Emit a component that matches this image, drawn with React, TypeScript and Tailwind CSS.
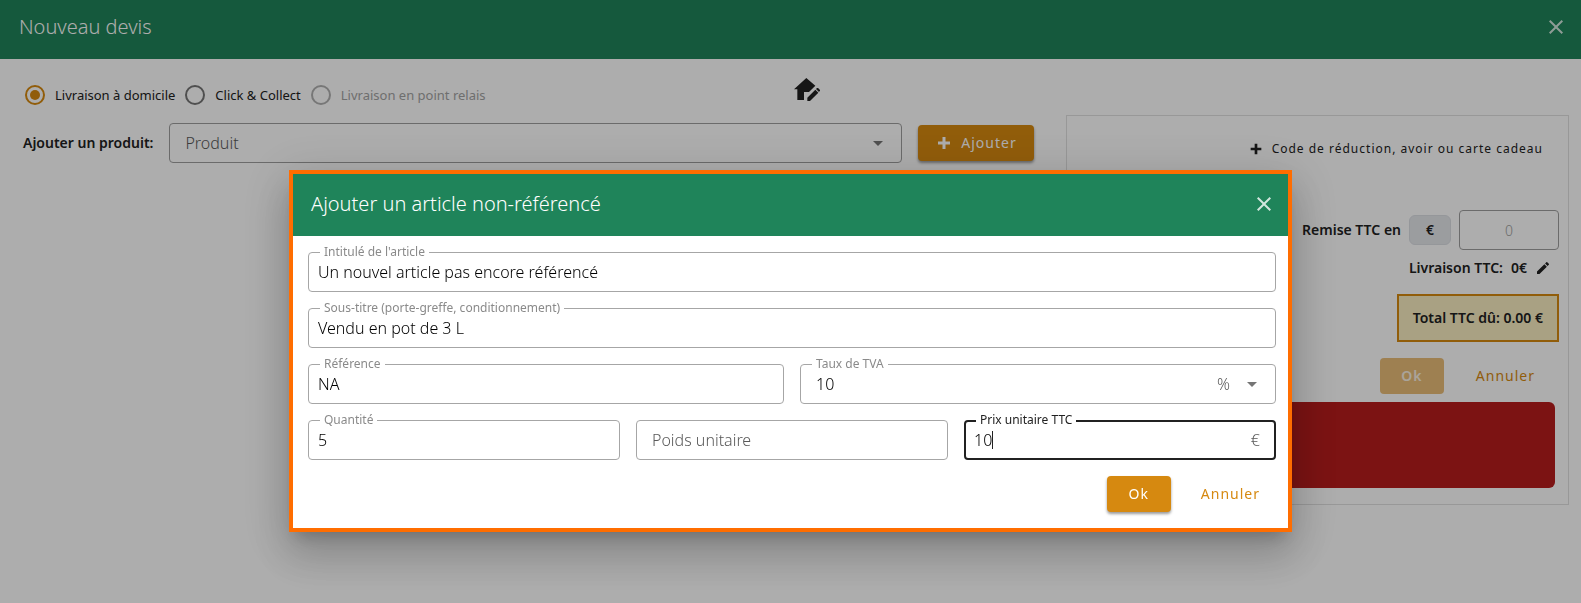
import React from 'react';
import { MdArrowDropDown, MdClose, MdEdit } from 'react-icons/md';

import cx from 'clsx';

type FieldProps = {
    id: string;
    label: string;
    value: string;
    suffix?: string;
    focused?: boolean;
}

const Field = ({ id, label, value, suffix, focused }: FieldProps) => (
    <div className="relative">
        <label
            htmlFor={id}
            className={cx(
                'absolute -top-2 left-3 px-1 bg-white text-xs leading-4 whitespace-nowrap',
                focused ? 'text-[#212121]' : 'text-[#8a8a8a]'
            )}
        >
            {label}
        </label>
        <input
            id={id}
            type="text"
            defaultValue={value}
            className={cx(
                'block w-full h-10 rounded bg-transparent text-base font-light text-black outline-none',
                focused ? 'border-2 border-[#212121] px-2' : 'border border-[#a6a6a6] px-[9px]'
            )}
        />
        {/* Caret */}
        {focused && <span className="absolute left-7 top-[11px] h-[18px] w-px bg-[#212121]" />}
        {suffix && <span className="absolute right-4 top-2 text-base font-light text-[#595959]">{suffix}</span>}
    </div>
);

const Radio = ({ label, checked, disabled }: { label: string, checked?: boolean, disabled?: boolean }) => (
    <label className={cx('flex items-center gap-2.5 text-[13px] leading-5', disabled ? 'text-[#a3a3a3]' : 'text-[#212121]')}>
        <input
            type="radio"
            name="livraison"
            defaultChecked={checked}
            disabled={disabled}
            className={cx(
                'appearance-none size-5 rounded-full border-2',
                disabled ? 'border-[#b0b0b0]' : 'border-[#757575]',
                'checked:border-[#d68910] checked:bg-[#d68910] checked:bg-clip-content checked:p-[3px]'
            )}
        />
        {label}
    </label>
);

const PlusIcon = ({ size }: { size: number }) => (
    <svg width={size} height={size} viewBox="0 0 24 24" fill="currentColor">
        <path d="M20 14h-6v6h-4v-6H4v-4h6V4h4v6h6z" />
    </svg>
);

const HomeEditIcon = () => (
    <svg width="26" height="23" viewBox="0 0 78 69" fill="currentColor">
        <path d="M37 0L0 34H10V66H30V42H45L64 23z" />
        <path d="M40 69V59L64 35L73 44L48 69zM66 33L69 30Q71 29 73 31L78 36Q79 38 77 39L75 42z" />
    </svg>
);

const Header = ({ title, className }: { title: string, className?: string }) => (
    <div className={cx('flex items-center justify-between bg-[#1f845a] text-white', className)}>
        <h1 className="text-xl leading-6 font-light">{title}</h1>
        <button type="button" aria-label="Fermer" className="text-white/80"><MdClose size={24} /></button>
    </div>
);

const buttonClass = 'h-9 rounded text-sm tracking-[1px]';
const raisedClass = 'bg-[#d68910] text-white shadow-[0_2px_3px_rgba(0,0,0,0.4)]';

const OrderPage = () => (
    <div>
        <Header title="Nouveau devis" className="h-[59px] pl-[19px] pr-[13px] pb-1.5" />

        {/* Delivery mode */}
        <div className="grid grid-cols-2 h-14 items-start">
            <div className="flex gap-2.5 pt-[26px] pl-[25px]">
                <Radio label="Livraison à domicile" checked />
                <Radio label="Click & Collect" />
                <Radio label="Livraison en point relais" disabled />
            </div>
            <button type="button" aria-label="Modifier l'adresse" className="justify-self-start pt-[19px] pl-[3px] text-[#212121]">
                <HomeEditIcon />
            </button>
        </div>

        <div className="grid grid-cols-3 items-start">
            {/* Product picker */}
            <div className="col-span-2 flex items-center gap-4 pt-2 pl-[23px] pr-5">
                <label htmlFor="produit" className="text-sm font-semibold text-[#212121]">Ajouter un produit:</label>
                <div className="relative flex-1">
                    <select id="produit" className="block appearance-none w-full h-10 px-[15px] rounded border border-[#9e9e9e] text-base font-light text-[#595959]">
                        <option>Produit</option>
                    </select>
                    <MdArrowDropDown size={24} className="absolute right-3 top-2 text-[#757575]" />
                </div>
                <button type="button" className={cx(buttonClass, raisedClass, 'flex items-center justify-center gap-2 w-29')}>
                    <PlusIcon size={18} />
                    Ajouter
                </button>
            </div>

            {/* Summary */}
            <div className="mx-3 pt-[15px] pb-4 pr-[9px] flex flex-col items-end border border-[#e0e0e0] text-sm font-semibold text-[#212121]">
                <button type="button" className="flex items-center gap-2 h-9 pr-4 text-xs font-normal tracking-[1px]">
                    <PlusIcon size={16} />
                    Code de réduction, avoir ou carte cadeau
                </button>
                <div className="flex items-center gap-2 mt-[43px]">
                    <label htmlFor="remise">Remise TTC en</label>
                    <button type="button" className="w-[42px] h-[30px] rounded-md border border-[#dcdfe4] bg-gray-200">€</button>
                    <input
                        id="remise"
                        type="text"
                        placeholder="0"
                        className="w-25 h-10 rounded border border-[#9e9e9e] text-center font-light placeholder:text-[#9e9e9e]"
                    />
                </div>
                <div className="flex items-center gap-2 h-5 mt-2 pr-2">
                    <span>Livraison TTC:</span>
                    <span>0€</span>
                    <button type="button" aria-label="Modifier la livraison"><MdEdit size={16} /></button>
                </div>
                <div className="flex items-center h-12 mt-4 px-3.5 border-2 border-[#d68910] bg-[#f9edc2]">Total TTC dû: 0.00 €</div>
                <div className="flex gap-4 mt-4 pr-2">
                    <button type="button" disabled className={cx(buttonClass, 'w-16 bg-[#e9bd78] text-white/80')}>Ok</button>
                    <button type="button" className={cx(buttonClass, 'px-4 font-normal text-[#d68910]')}>Annuler</button>
                </div>
                <div className="self-stretch h-[86px] mt-2 ml-[11px] mr-1 rounded-md bg-[#b71c1c]" />
            </div>
        </div>
    </div>
);

const ArticleDialog = () => (
    <div
        role="dialog"
        aria-label="Ajouter un article non-référencé"
        className="w-full max-w-[1003px] border-4 border-[#ff6d00] bg-white shadow-[0_11px_15px_-7px_rgba(0,0,0,0.2),0_24px_38px_3px_rgba(0,0,0,0.14),0_9px_46px_8px_rgba(0,0,0,0.12)]"
    >
        <Header title="Ajouter un article non-référencé" className="h-[62px] pl-[18px] pr-3 pb-0.5" />
        <form className="flex flex-col gap-4 pt-4 pb-4 pl-[15px] pr-3">
            <Field id="intitule" label="Intitulé de l'article" value="Un nouvel article pas encore référencé" />
            <Field id="sous-titre" label="Sous-titre (porte-greffe, conditionnement)" value="Vendu en pot de 3 L" />
            <div className="grid grid-cols-2 gap-4">
                <Field id="reference" label="Référence" value="NA" />
                <div className="relative">
                    <label htmlFor="tva" className="absolute -top-2 left-3 px-1 bg-white text-xs leading-4 text-[#8a8a8a]">Taux de TVA</label>
                    <select id="tva" className="block appearance-none w-full h-10 px-[15px] rounded border border-[#a6a6a6] text-base font-light text-black">
                        <option>10</option>
                    </select>
                    <span className="absolute right-[46px] top-2 text-base font-light text-[#595959]">%</span>
                    <MdArrowDropDown size={24} className="absolute right-3 top-2 text-[#757575]" />
                </div>
            </div>
            <div className="grid grid-cols-3 gap-4">
                <Field id="quantite" label="Quantité" value="5" />
                <input
                    type="text"
                    aria-label="Poids unitaire"
                    placeholder="Poids unitaire"
                    className="w-full h-10 px-[15px] rounded border border-[#a6a6a6] text-base font-light placeholder:text-[#595959]"
                />
                <Field id="prix" label="Prix unitaire TTC" value="10" suffix="€" focused />
            </div>
            <div className="flex justify-end gap-3.5">
                <button type="button" className={cx(buttonClass, raisedClass, 'w-16')}>Ok</button>
                <button type="button" className={cx(buttonClass, 'px-4 text-[#d68910]')}>Annuler</button>
            </div>
        </form>
    </div>
);

const App = () => {
    return (
        <div className='min-h-screen bg-white font-["Noto_Sans",sans-serif]'>
            <OrderPage />
            <div className="fixed inset-0 flex items-start justify-center pt-[170px] bg-black/32">
                <ArticleDialog />
            </div>
        </div>
    );
};

export default App;
